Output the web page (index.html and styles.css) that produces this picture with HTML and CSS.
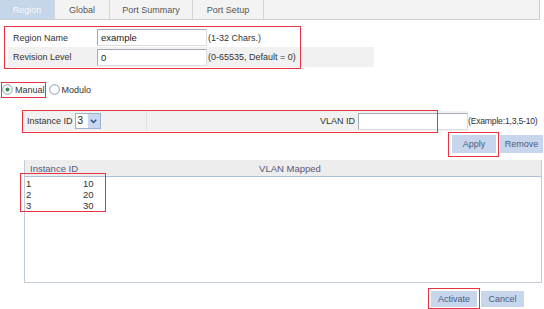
FILE: index.html
```html
<!DOCTYPE html>
<html>
<head>
<meta charset="utf-8">
<link rel="stylesheet" href="styles.css">
</head>
<body>
<div class="page">
  <div class="tabs">
    <div class="tab active">Region</div>
    <div class="tab">Global</div>
    <div class="tab wide">Port Summary</div>
    <div class="tab mid">Port Setup</div>
    <div class="tab-rest"></div>
  </div>

  <div class="form">
    <div class="frow">
      <span class="flabel">Region Name</span>
      <span class="input w109">example</span>
      <span class="hint">(1-32 Chars.)</span>
    </div>
    <div class="frow gray">
      <span class="flabel">Revision Level</span>
      <span class="input w109">0</span>
      <span class="hint">(0-65535, Default = 0)</span>
    </div>
  </div>

  <div class="radios">
    <span class="radio">
      <svg width="11" height="11" viewBox="0 0 11 11"><circle cx="5.5" cy="5.5" r="4.8" fill="#fff" stroke="#8a9bb0" stroke-width="1"/><circle cx="5.5" cy="5.5" r="2" fill="#3a8a4a"/></svg>
      Manual
    </span>
    <span class="radio">
      <svg width="11" height="11" viewBox="0 0 11 11"><circle cx="5.5" cy="5.5" r="4.8" fill="#fff" stroke="#8a9bb0" stroke-width="1"/></svg>
      Modulo
    </span>
  </div>

  <div class="instrow">
    <div class="instbox">
      <div class="icell1">
        <span>Instance ID</span>
        <span class="select"><span class="sval">3</span><span class="sbtn"><svg width="7" height="5" viewBox="0 0 7 5"><path d="M0.8 0.8 L3.5 3.6 L6.2 0.8" fill="none" stroke="#2a4a8a" stroke-width="1.4"/></svg></span></span>
      </div>
      <div class="icell2">
        <span class="vlabel">VLAN ID</span>
        <span class="input w109"></span>
      </div>
    </div>
    <span class="hint2">(Example:1,3,5-10)</span>
  </div>

  <div class="btnrow">
    <span class="btn b44">Apply</span>
    <span class="btn b43">Remove</span>
  </div>

  <div class="table">
    <div class="thead">
      <span class="th1">Instance ID</span>
      <span class="th2">VLAN Mapped</span>
    </div>
    <div class="tbody">
      <div class="tr"><span class="td1">1</span><span>10</span></div>
      <div class="tr"><span class="td1">2</span><span>20</span></div>
      <div class="tr"><span class="td1">3</span><span>30</span></div>
    </div>
  </div>

  <div class="btnrow bottom">
    <span class="btn b46">Activate</span>
    <span class="btn b43">Cancel</span>
  </div>

  <div class="mark m1"></div>
  <div class="mark m2"></div>
  <div class="mark m3"></div>
  <div class="mark m4"></div>
  <div class="mark m5"></div>
  <div class="mark m6"></div>
</div>
</body>
</html>
```

FILE: styles.css
```css
html, body {
  margin: 0;
  padding: 0;
  background: #fff;
}
.page {
  position: relative;
  width: 544px;
  height: 309px;
  overflow: hidden;
  font-family: "Liberation Sans", Arial, sans-serif;
  font-size: 9px;
  color: #333;
  display: flex;
  flex-direction: column;
}
.tabs {
  display: flex;
  height: 19px;
  width: 539px;
  border-bottom: 1px solid #cfcfcf;
  border-right: 1px solid #cfcfcf;
  background: #f3f3f3;
}
.tab {
  width: 54px;
  border-right: 1px solid #d4d4d4;
  display: flex;
  align-items: center;
  justify-content: center;
  color: #555;
}
.tab.wide { width: 82px; }
.tab.mid { width: 70px; }
.tab.active {
  background: #c5d5ea;
  color: #f4f8fc;
}
.tab-rest { flex: 1; }

.form {
  margin: 8px 0 0 8px;
  width: 366px;
}
.frow {
  height: 19px;
  display: flex;
  align-items: center;
  white-space: nowrap;
}
.frow.gray { background: #f1f1f1; height: 20px; }
.flabel {
  width: 84px;
  padding-left: 5px;
}
.input {
  box-sizing: border-box;
  height: 17px;
  background: #fff;
  border: 1px solid #a5acb5;
  border-right-color: #dadde1;
  border-bottom-color: #dadde1;
  display: flex;
  align-items: center;
  padding-left: 3px;
  font-size: 9.5px;
  color: #222;
}
.w109 { width: 110px; }
.hint { margin-left: 1px; }

.radios {
  margin: 15px 0 0 2px;
  height: 15px;
  display: flex;
  align-items: center;
  gap: 4px;
}
.radio {
  display: flex;
  align-items: center;
  gap: 2px;
  color: #333;
}

.instrow {
  margin: 14px 0 0 22px;
  height: 20px;
  display: flex;
  align-items: center;
  white-space: nowrap;
}
.instbox {
  flex: none;
  width: 446px;
  height: 20px;
  display: flex;
  background: #f1f1f1;
}
.icell1 {
  width: 119px;
  padding-left: 5px;
  display: flex;
  align-items: center;
  gap: 2px;
  border-right: 1px solid #e2e2e2;
}
.icell2 {
  flex: 1;
  display: flex;
  align-items: center;
  justify-content: flex-end;
  gap: 3px;
}
.vlabel { color: #333; }
.select {
  box-sizing: border-box;
  width: 26px;
  height: 16px;
  border: 1px solid #9fb3cf;
  background: #fff;
  display: flex;
  align-items: stretch;
}
.sval {
  flex: 1;
  padding-left: 2px;
  font-size: 10px;
  line-height: 13px;
  color: #222;
}
.sbtn {
  width: 12px;
  background: #c8d8f0;
  display: flex;
  align-items: center;
  justify-content: center;
}
.hint2 {
  flex: none;
  font-size: 8.6px;
  letter-spacing: -0.2px;
}

.btnrow {
  margin-top: 4px;
  height: 18px;
  display: flex;
  justify-content: flex-end;
  gap: 4px;
  padding-right: 1px;
}
.btn {
  background: #c7d6ec;
  color: #4a5b7e;
  display: flex;
  align-items: center;
  justify-content: center;
}
.b44 { width: 44px; }
.b43 { width: 43px; }
.b46 { width: 46px; }
.btnrow.bottom {
  margin-top: 8px;
  height: 16px;
  padding-right: 20px;
}

.table {
  margin: 7px 0 0 24px;
  width: 518px;
  height: 123px;
  box-sizing: border-box;
  border-left: 1px solid #c2cbd8;
  border-right: 1px solid #c2cbd8;
  border-bottom: 1px solid #c2cbd8;
  display: flex;
  flex-direction: column;
}
.thead {
  height: 16px;
  background: #ededed;
  border-bottom: 1px solid #a9c0dc;
  display: flex;
  align-items: center;
  color: #55577a;
  font-size: 9.5px;
}
.th1 { width: 100px; padding-left: 5px; }
.th2 { width: 320px; text-align: center; }
.tbody { padding-top: 1px; }
.tr {
  height: 11px;
  line-height: 11px;
  display: flex;
  padding-left: 1px;
  font-size: 9.5px;
  color: #333;
}
.td1 { width: 57px; }

.mark {
  position: absolute;
  border: 1px solid #e8323f;
  box-sizing: border-box;
}
.m1 { left: 4px; top: 26px; width: 297px; height: 43px; }
.m2 { left: 1px; top: 82px; width: 45px; height: 16px; }
.m3 { left: 22px; top: 110px; width: 416px; height: 23px; }
.m4 { left: 448px; top: 132px; width: 51px; height: 25px; }
.m5 { left: 20px; top: 173px; width: 86px; height: 39px; }
.m6 { left: 428px; top: 288px; width: 52px; height: 21px; }
```
